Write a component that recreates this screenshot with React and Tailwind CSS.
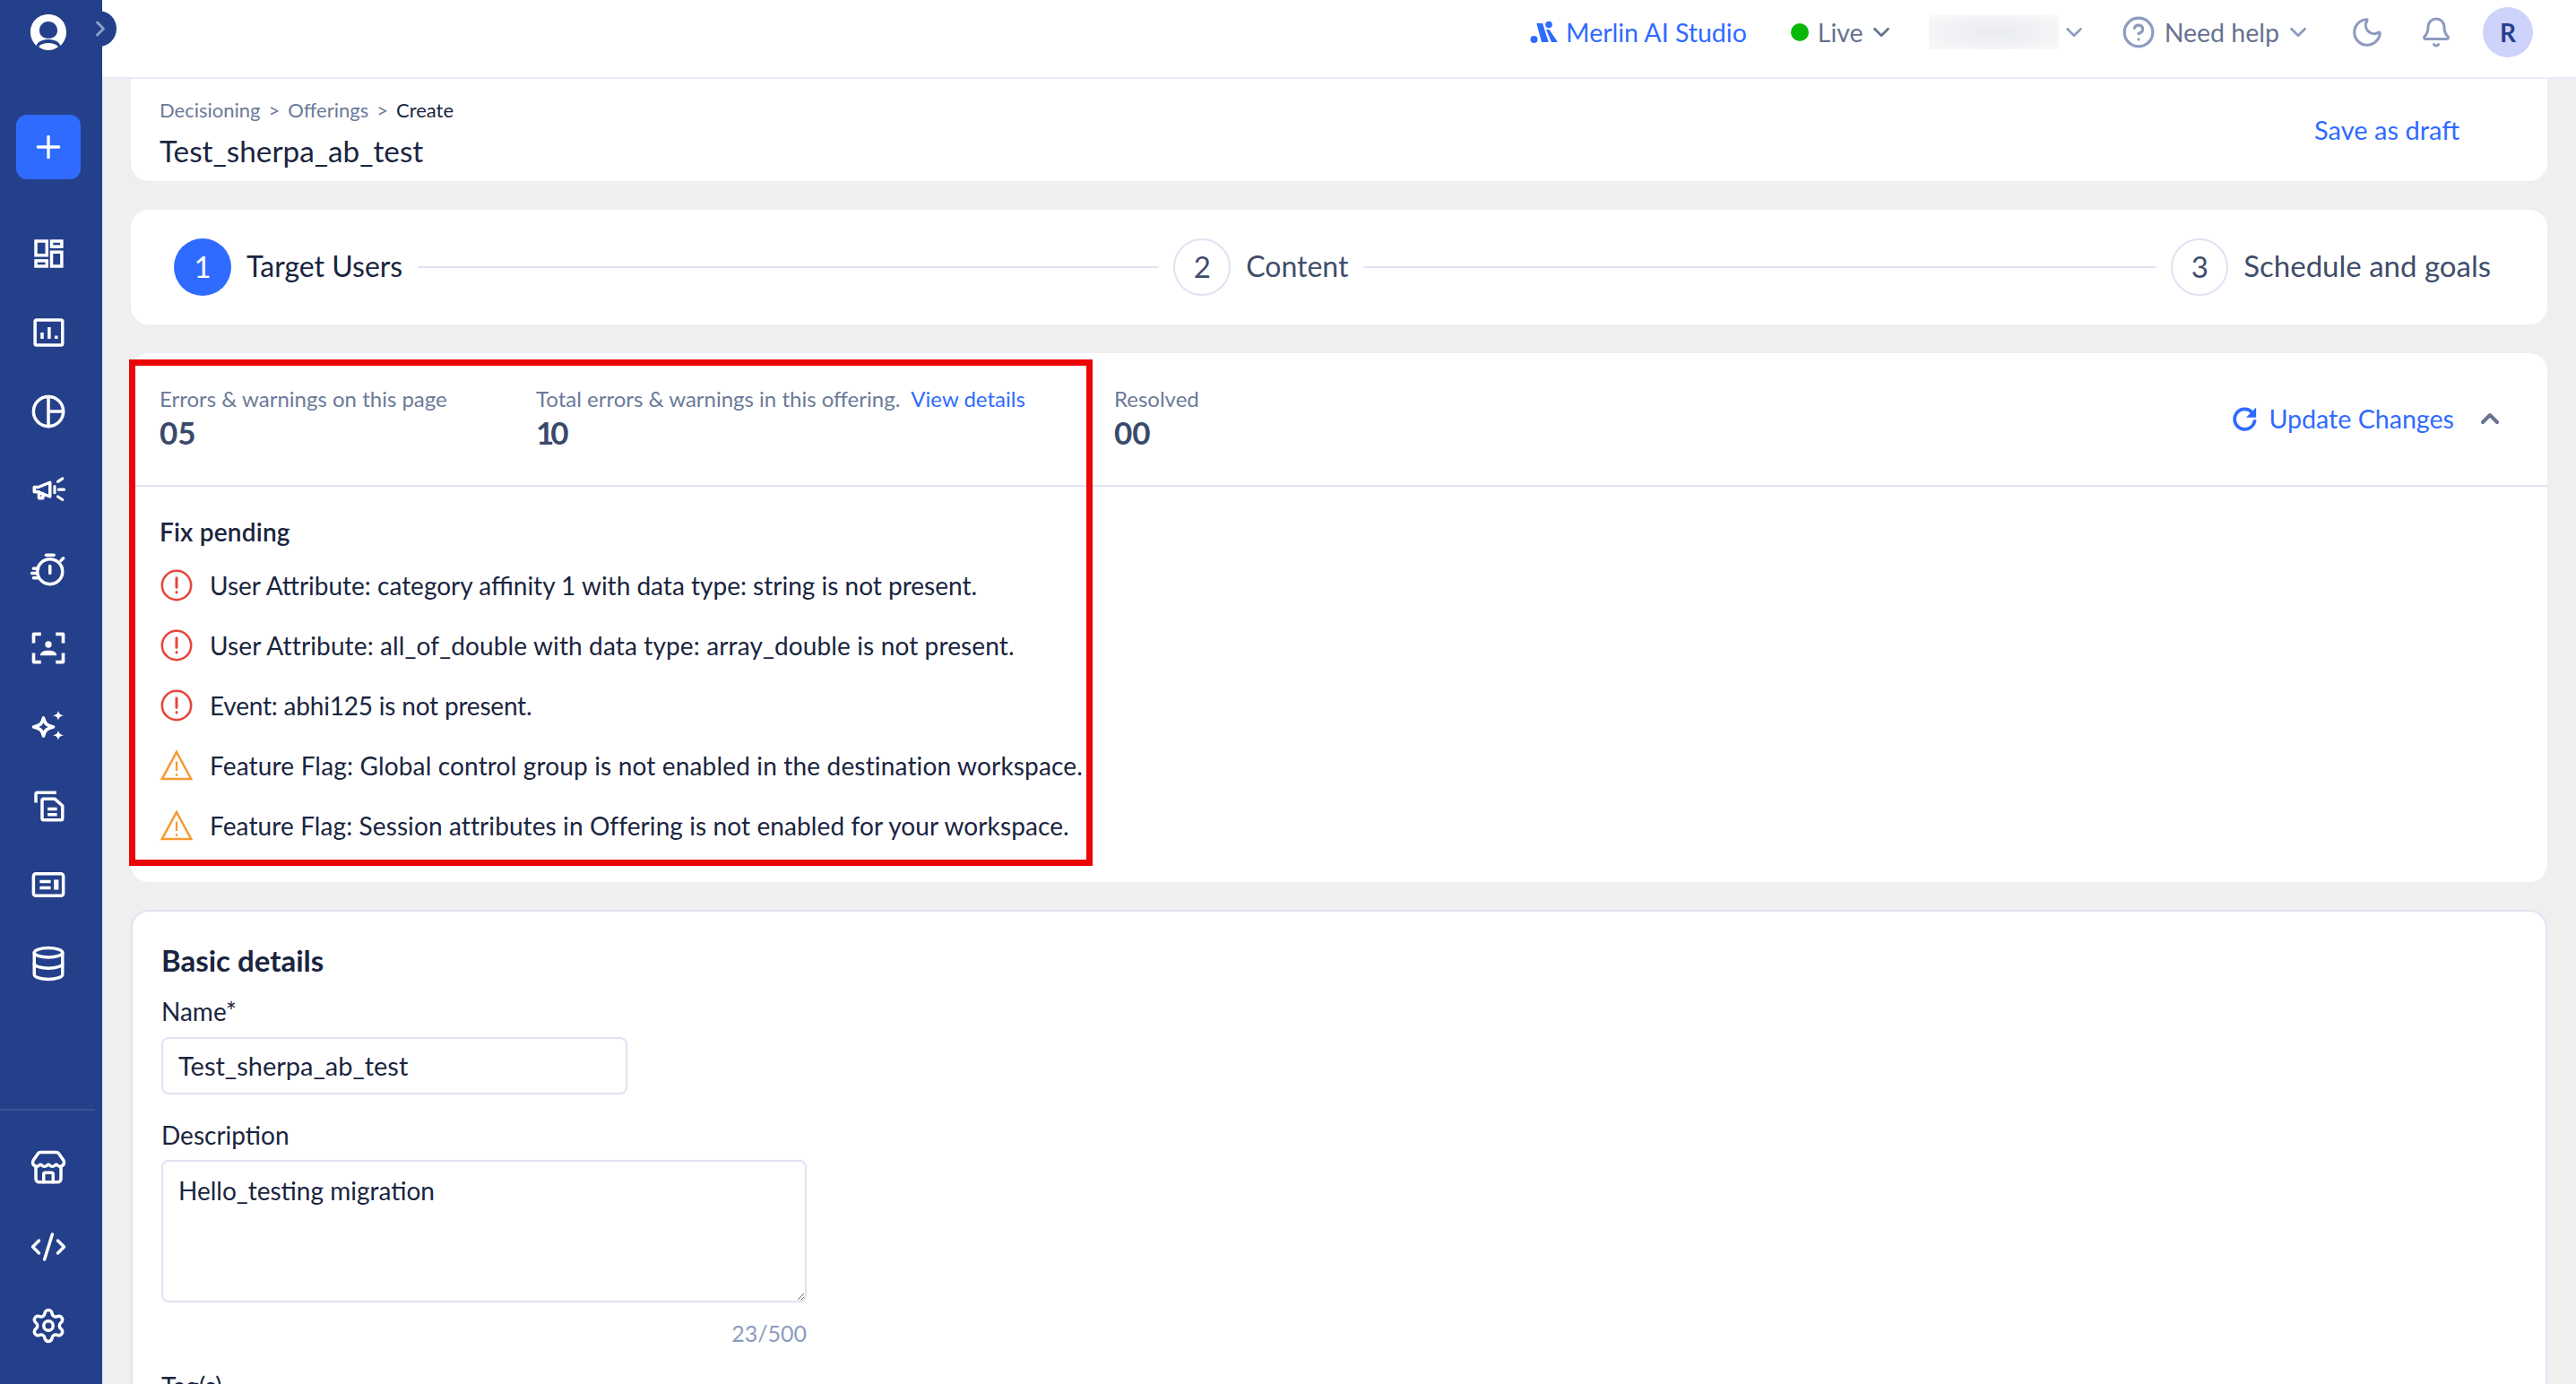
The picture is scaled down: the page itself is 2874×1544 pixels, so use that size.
import { ChevronDown, ChevronRight, ChevronUp, CircleHelp, Moon, Bell, Plus, Database, Store, CodeXml, Settings } from 'lucide-react';

const Svg = ({ children, size = 44 }) => (
  <svg width={size} height={size} viewBox="0 0 24 24" fill="none" stroke="currentColor" strokeWidth="2" strokeLinecap="round" strokeLinejoin="round">
    {children}
  </svg>
);

const navIcons = [
  <Svg key="a" size={42}><g strokeLinecap="butt" strokeLinejoin="miter"><rect x="4" y="4" width="7" height="9" /><rect x="14" y="4" width="6.5" height="3.5" /><rect x="4" y="16.5" width="7" height="3.5" /><rect x="14" y="11" width="6.5" height="9" /></g></Svg>,
  <Svg key="b" size={42}><rect x="3.5" y="4" width="17.5" height="16" rx="1" /><path d="M8 16v-4M12.500 16V8.500M17 16v-2" strokeLinecap="butt" /></Svg>,
  <Svg key="c" size={42}><circle cx="12" cy="12" r="9.5" /><path d="M12 2.500v19M12 12h9.500" /></Svg>,
  <Svg key="d" size={42}><path d="M3 10h2.500L13 7v9l-7.500-3H3zM6 13v4h2.500v-3" /><path d="M16 9.500v4M18 6.500l3-2M18.500 11.500H22M18 16l3 2" strokeWidth="1.800" /></Svg>,
  <Svg key="e" size={42}><circle cx="13" cy="13.500" r="8" /><path d="M10.500 3h5M13 10v4.500M20 6.500l1.500-1.500M2.500 11.500h3M1.500 14.500h3M2.500 17.500h3" /></Svg>,
  <Svg key="f" size={44}><path d="M7.500 3.500H3V9M16.500 3.500H21V9M3 15v5.500h4.500M21 15v5.500h-4.500" strokeLinecap="butt" /><circle cx="12" cy="9.800" r="2" fill="currentColor" stroke="none" /><path d="M7 16.500c0-2 2-3 5-3s5 1 5 3z" fill="currentColor" stroke="none" /></Svg>,
  <Svg key="g" size={44}><path d="M9 6.500c.8 3.500 1.700 4.400 6 5.500-4.300 1.100-5.200 2-6 5.500-.8-3.500-1.700-4.400-6-5.500 4.300-1.100 5.200-2 6-5.500z" /><path d="M18 2c.4 1.800 1 2.500 3.500 3-2.500.5-3.100 1.200-3.500 3-.4-1.800-1-2.500-3.500-3 2.500-.5 3.100-1.200 3.500-3zM18 14c.4 1.800 1 2.500 3.500 3-2.500.5-3.100 1.200-3.500 3-.4-1.800-1-2.500-3.500-3 2.500-.5 3.100-1.200 3.500-3z" fill="currentColor" stroke="none" /></Svg>,
  <Svg key="h" size={42}><path d="M4 10V4.500q0-1 1-1h12" strokeLinecap="butt" /><path d="M8 8.500q0-1 1-1h7l5 4.500v8q0 1-1 1H9q-1 0-1-1z" /><path d="M11.500 14h6M11.500 17.500h6" strokeLinecap="butt" /></Svg>,
  <Svg key="i" size={42}><rect x="2.500" y="5" width="19" height="14" rx="1.500" /><path d="M6.500 10h7M6.500 14h7" strokeLinecap="butt" /><rect x="15.500" y="8.800" width="3" height="6.400" fill="currentColor" stroke="none" /></Svg>,
  <Database key="j" size={42} strokeWidth={2} />,
];

const footIcons = [
  <Store key="a" size={42} strokeWidth={2} />,
  <CodeXml key="b" size={42} strokeWidth={2} />,
  <Settings key="c" size={42} strokeWidth={2} />,
];

const errors = [
  { type: 'error', cls: 'ml-[18px] text-[28px]', text: 'User Attribute: category affinity 1 with data type: string is not present.' },
  { type: 'error', cls: 'ml-[18px] text-[28px] tracking-[0.13px]', text: 'User Attribute: all_of_double with data type: array_double is not present.' },
  { type: 'error', cls: 'ml-[18px] text-[28px] tracking-[-0.2px]', text: 'Event: abhi125 is not present.' },
  { type: 'warning', cls: 'ml-[18px] text-[28px] tracking-[0.16px]', text: 'Feature Flag: Global control group is not enabled in the destination workspace.' },
  { type: 'warning', cls: 'ml-[18px] text-[28px] tracking-[0.1px]', text: 'Feature Flag: Session attributes in Offering is not enabled for your workspace.' },
];

const ErrorIcon = () => (
  <svg width="36" height="36" viewBox="0 0 24 24" fill="none" stroke="#e8443a" strokeWidth="1.700" strokeLinecap="round">
    <circle cx="12" cy="12" r="10.800" />
    <path d="M12 6.500v7M12 17v.4" strokeWidth="2" />
  </svg>
);

const WarnIcon = () => (
  <svg width="38" height="36" viewBox="0 0 24 24" fill="none" stroke="#f59a33" strokeWidth="1.700">
    <path d="M12 2 22.800 22H1.200z" strokeLinejoin="miter" />
    <path d="M12 9v7M12 18.200v1.600" strokeWidth="1.500" />
  </svg>
);

const Step = ({ num, label, active, labelClass }) => (
  <div className="flex items-center gap-[17px] shrink-0">
    <div className={active
      ? 'w-[64px] h-[64px] rounded-full bg-[#2f6bff] text-white flex items-center justify-center text-[33px]'
      : 'w-[64px] h-[64px] rounded-full border-2 border-[#dfe3f2] text-[#3f4d6b] flex items-center justify-center text-[33px]'}>
      {num}
    </div>
    <span className={labelClass}>{label}</span>
  </div>
);

export default function App() {
  return (
    <div className="relative flex w-[2874px] h-[1544px] overflow-hidden bg-[#efefef] font-['Lato',sans-serif] text-[#1a2540]">
      {/* Sidebar */}
      <aside className="w-[114px] shrink-0 bg-[#25408a] pr-[6px] flex flex-col items-center text-white">
        <div className="h-[128px] pt-[14px] flex justify-center">
          <svg width="44" height="44" viewBox="0 0 44 44">
            <path d="M22 2C10 2 2 11 2 22c0 6 2.500 11 6.500 15 2-5 7-7 13.500-7s11.500 2 13.500 7c4-4 6.500-9 6.500-15C42 11 34 2 22 2zm0 8c6 0 10 4.500 10 10S28 29 22 29s-10-3.500-10-9 4-10 10-10z" fill="currentColor" />
            <path d="M11 38c3-3 6.500-4 11-4s8 1 11 4c-3 2.500-7 4-11 4s-8-1.500-11-4z" fill="currentColor" />
          </svg>
        </div>
        <div className="w-[72px] h-[72px] rounded-[12px] bg-[#2f6bff] flex items-center justify-center">
          <Plus size={40} strokeWidth={2} />
        </div>
        <nav className="mt-[39px] flex flex-col items-center">
          {navIcons.map((icon, i) => (
            <div key={i} className="h-[88px] w-[72px] flex items-center justify-center">{icon}</div>
          ))}
        </nav>
        <div className="mt-auto w-[114px] -mr-[6px] pr-[6px] pb-[21px] flex flex-col items-center">
          <div className="w-[106px] mr-[2px] h-[2px] bg-[#3a5296] mb-[20px]" />
          {footIcons.map((icon, i) => (
            <div key={i} className="h-[88px] w-[72px] flex items-center justify-center">{icon}</div>
          ))}
        </div>
      </aside>

      {/* Collapse toggle */}
      <div className="absolute left-[90px] top-[12px] w-[40px] h-[40px] rounded-full bg-[#25408a] flex items-center justify-center text-[#8ea0c8]">
        <ChevronRight size={28} strokeWidth={2.500} className="ml-[4px]" />
      </div>

      <div className="flex-1 min-w-0 flex flex-col">
        {/* Top bar */}
        <header className="h-[88px] shrink-0 bg-white border-b-2 border-[#e9edfb] flex items-center justify-end pr-[48px] pb-[14px]">
          <svg width="31" height="26" viewBox="0 0 31 26" className="text-[#2f6bff]" fill="currentColor">
            <circle cx="4.500" cy="21" r="4" />
            <path d="M7.300 3H14l6.700 21H13z" />
            <circle cx="21" cy="4.500" r="3.800" />
            <path d="M18 10h3.500L31 24h-7z" />
          </svg>
          <span className="ml-[9px] text-[28.500px] text-[#2f6bff]">Merlin AI Studio</span>
          <span className="ml-[49px] w-[20px] h-[20px] rounded-full bg-[#0ab80a]" />
          <span className="ml-[10px] text-[28.500px] text-[#66728f]">Live</span>
          <ChevronDown size={30} strokeWidth={2.200} className="ml-[5px] text-[#66728f]" />
          <div className="ml-[38px] w-[145px] h-[38px] bg-[radial-gradient(ellipse_at_center,#e9ebef,#f8f9fa)]" />
          <ChevronDown size={30} strokeWidth={2} className="ml-[2px] text-[#8d9bbd]" />
          <CircleHelp size={38} strokeWidth={2} className="ml-[38px] text-[#8d9bbd]" />
          <span className="ml-[10px] text-[28.500px] text-[#66728f]">Need help</span>
          <ChevronDown size={30} strokeWidth={2.200} className="ml-[6px] text-[#8d9bbd]" />
          <Moon size={38} strokeWidth={2} className="ml-[43px] text-[#8d9bbd]" />
          <Bell size={36} strokeWidth={2} className="ml-[40px] text-[#8d9bbd]" />
          <div className="ml-[34px] w-[56px] h-[56px] rounded-full bg-[#ced3fb] flex items-center justify-center text-[28px] font-bold text-[#25408a]">R</div>
        </header>

        <main className="flex-1 min-h-0 px-[32px] overflow-hidden">
          {/* Title card */}
          <section className="h-[114px] bg-white rounded-b-[20px] pl-[32px] pr-[98px] flex items-start justify-between">
            <div>
              <div className="mt-[20px] h-[28px] flex items-center gap-[9px] text-[22px] text-[#6b7a99]">
                <span>Decisioning</span><span>&gt;</span><span>Offerings</span><span>&gt;</span><span className="text-[#1a2540]">Create</span>
              </div>
              <h1 className="mt-[12px] text-[33.300px] leading-[40px]">Test_sherpa_ab_test</h1>
            </div>
            <button className="mt-[35px] text-[29px] text-[#2f6bff]">Save as draft</button>
          </section>

          {/* Stepper */}
          <section className="mt-[32px] h-[128px] bg-white rounded-[20px] pl-[48px] pr-[63px] flex items-center">
            <Step num="1" label="Target Users" active labelClass="text-[32px] text-[#1a2540] -mt-[2px]" />
            <div className="w-[827px] shrink-0 h-[2px] bg-[#dfe3f2] ml-[17px] mr-[16px]" />
            <Step num="2" label="Content" labelClass="text-[32px] text-[#3f4d6b] -mt-[2px]" />
            <div className="flex-1 h-[2px] bg-[#dfe3f2] mx-[17px]" />
            <Step num="3" label="Schedule and goals" labelClass="text-[33px] text-[#3f4d6b] -mt-[2px]" />
          </section>

          {/* Errors and warnings */}
          <section className="mt-[32px] h-[590px] bg-white rounded-[20px]">
            <div className="h-[149px] border-b-2 border-[#dfe3f2] pl-[32px] pr-[48px] flex items-center">
              <div className="w-[420px] self-start pt-[36px]">
                <div className="text-[24px] leading-[30px] text-[#6b7a99]">Errors &amp; warnings on this page</div>
                <div className="text-[35px] leading-[44px] font-bold text-[#3a4a6b]">05</div>
              </div>
              <div className="w-[645px] self-start pt-[36px]">
                <div className="text-[24px] leading-[30px] text-[#6b7a99]">
                  Total errors &amp; warnings in this offering.
                  <span className="ml-[12px] text-[#2f6bff]">View details</span>
                </div>
                <div className="text-[35px] leading-[44px] font-bold tracking-[-4px] text-[#3a4a6b]">10</div>
              </div>
              <div className="flex-1 self-start pt-[36px]">
                <div className="text-[24px] leading-[30px] text-[#6b7a99]">Resolved</div>
                <div className="text-[35px] leading-[44px] font-bold text-[#3a4a6b]">00</div>
              </div>
              <div className="flex items-center text-[#2f6bff]">
                <svg width="30" height="30" viewBox="0 0 24 24" fill="none" stroke="currentColor" strokeWidth="3">
                  <path d="M19 6.500A9 9 0 1 0 21.300 13" />
                  <path d="M22.500 2v9h-9z" fill="currentColor" stroke="none" />
                </svg>
                <span className="ml-[12px] text-[28.600px]">Update Changes</span>
                <ChevronUp size={32} strokeWidth={3} className="ml-[24px] text-[#66728f]" />
              </div>
            </div>
            <div className="pl-[32px] pt-[32px]">
              <h3 className="text-[28px] leading-[36px] font-semibold tracking-[0.2px]">Fix pending</h3>
              <ul className="mt-[8px]">
                {errors.map((item, i) => (
                  <li key={i} className="h-[67px] flex items-center">
                    <div className="w-[38px] flex justify-center">{item.type === 'error' ? <ErrorIcon /> : <WarnIcon />}</div>
                    <span className={item.cls}>{item.text}</span>
                  </li>
                ))}
              </ul>
            </div>
          </section>

          {/* Basic details */}
          <section className="mt-[31px] h-[700px] bg-white rounded-[20px] border-2 border-[#dfe3f2] pl-[32px] pt-[33px]">
            <h2 className="text-[33px] leading-[42px] font-bold">Basic details</h2>
            <label className="block mt-[18px] text-[28px] leading-[36px]">Name*</label>
            <input readOnly value="Test_sherpa_ab_test" className="block mt-[11px] w-[520px] h-[64px] rounded-[8px] border-2 border-[#dfe3f2] px-[17px] pb-[2px] text-[29px] outline-none" />
            <label className="block mt-[27px] text-[28px] leading-[36px]">Description</label>
            <textarea readOnly defaultValue="Hello_testing migration" className="block mt-[10px] w-[720px] h-[159px] rounded-[8px] border-2 border-[#dfe3f2] px-[17px] py-[14px] text-[28px] leading-[36px] outline-none" />
            <div className="w-[720px] mt-[19px] text-right text-[25px] leading-[30px] text-[#8d9bbd]">23/500</div>
            <label className="block mt-[26px] text-[28px] leading-[36px]">Tag(s)</label>
          </section>
        </main>
      </div>

      {/* Highlight box on the screenshot */}
      <div className="absolute left-[144px] top-[401px] w-[1075px] h-[565px] border-[7px] border-[#ea0606] pointer-events-none" />
    </div>
  );
}
